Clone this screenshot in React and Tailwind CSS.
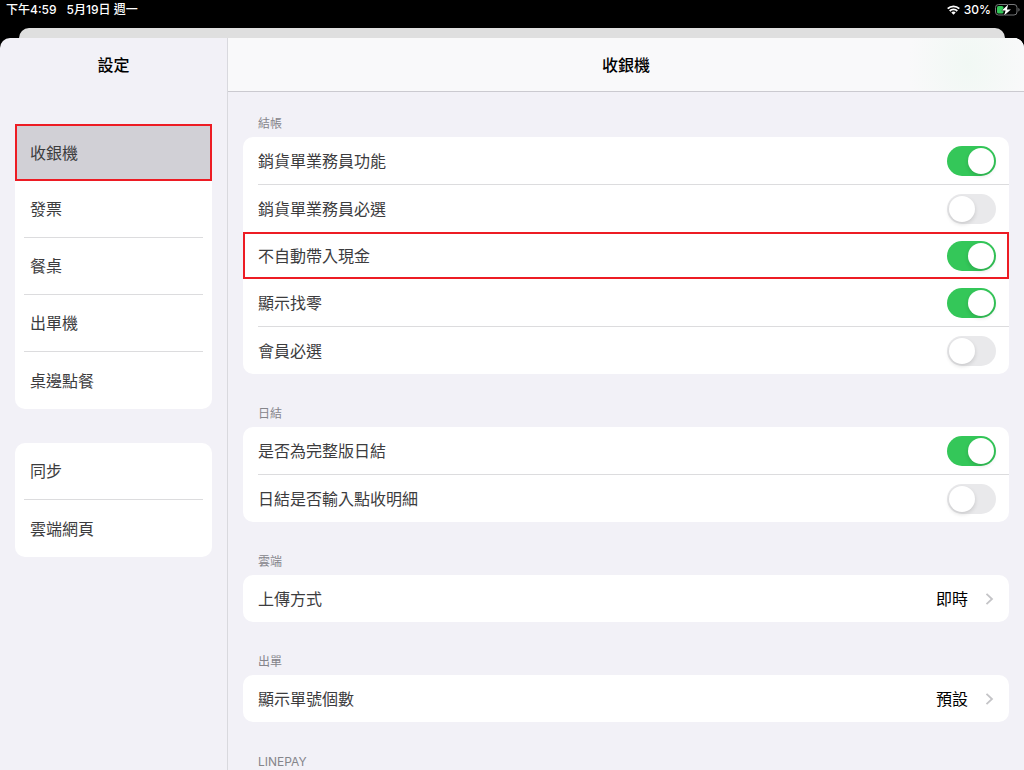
import React, { useState } from 'react';
import clsx from 'clsx';

const menuGroups = [
  ['收銀機', '發票', '餐桌', '出單機', '桌邊點餐'],
  ['同步', '雲端網頁'],
];

const sections = [
  {
    title: '結帳',
    rows: [
      { label: '銷貨單業務員功能', on: true, divider: true },
      { label: '銷貨單業務員必選', on: false },
      { label: '不自動帶入現金', on: true, marked: true },
      { label: '顯示找零', on: true, divider: true },
      { label: '會員必選', on: false },
    ],
  },
  {
    title: '日結',
    rows: [
      { label: '是否為完整版日結', on: true, divider: true },
      { label: '日結是否輸入點收明細', on: false },
    ],
  },
  { title: '雲端', rows: [{ label: '上傳方式', value: '即時' }] },
  { title: '出單', rows: [{ label: '顯示單號個數', value: '預設' }] },
  { title: 'LINEPAY', rows: [] },
];

const WifiIcon = () => (
  <svg width="13" height="10" viewBox="0 0 13 10" fill="none" stroke="#fff" strokeWidth="1.8">
    <path d="M0.7 3.7a8.2 8.2 0 0 1 11.6 0" />
    <path d="M2.7 6a5.3 5.3 0 0 1 7.6 0" />
    <path d="M6.5 9.8 4.3 7.6a3.1 3.1 0 0 1 4.4 0z" fill="#fff" stroke="none" />
  </svg>
);

const BatteryIcon = () => (
  <svg width="25" height="12" viewBox="0 0 25 12">
    <rect x="0.5" y="0.5" width="21.5" height="10.5" rx="3" fill="none" stroke="#77787a" />
    <path d="M23.4 4v3.6c.8-.3 1.2-1 1.2-1.8s-.4-1.5-1.2-1.8z" fill="#77787a" />
    <rect x="2" y="2" width="6.5" height="7.6" rx="1.6" fill="#34c759" />
    <path
      d="M13.2 0.4 6.9 6.6h3.7l-1.5 5 6.8-6.2h-4z"
      fill="#fff"
      stroke="#000"
      strokeWidth="0.8"
      paintOrder="stroke"
    />
  </svg>
);

const StatusBar = () => (
  <div className="flex h-7 shrink-0 items-start justify-between pt-0.5 pr-1 pl-1.5 text-xs leading-4 font-medium text-white">
    <div className="flex gap-2.5">
      <span>下午4:59</span>
      <span>5月19日 週一</span>
    </div>
    <div className="flex items-center gap-1">
      <WifiIcon />
      <span>30%</span>
      <BatteryIcon />
    </div>
  </div>
);

const Toggle = ({ id, defaultOn }) => {
  const [on, setOn] = useState(defaultOn);
  return (
    <input
      id={id}
      type="checkbox"
      role="switch"
      checked={on}
      onChange={() => setOn(!on)}
      className="h-[30px] w-[49px] shrink-0 cursor-pointer appearance-none rounded-full bg-[#e9e9eb] p-0.5 before:block before:size-[26px] before:rounded-full before:bg-white before:shadow-[0_2px_4px_rgba(0,0,0,0.14)] checked:bg-[#34c759] checked:before:ml-[19px]"
    />
  );
};

const Row = ({ id, row }) => (
  <li>
    <div className={clsx('flex h-[47px] items-center', row.marked ? 'border-2 border-[#ed1c24] pr-[11px] pl-[13px]' : 'pr-[13px] pl-[15px]')}>
      {row.value ? (
        <button type="button" className="flex flex-1 items-center text-left">
          <span className="flex-1">{row.label}</span>
          <span className="text-black">{row.value}</span>
          <svg className="mr-0.5 ml-[17px]" width="9" height="14" viewBox="0 0 9 14" fill="none" stroke="#c4c4c7" strokeWidth="1.8">
            <path d="M1.5 1.8 7 7l-5.5 5.2" />
          </svg>
        </button>
      ) : (
        <>
          <label htmlFor={id} className="flex-1">{row.label}</label>
          <Toggle id={id} defaultOn={row.on} />
        </>
      )}
    </div>
    {row.divider && <div className="ml-[15px] h-px bg-[#dcdcde]" />}
  </li>
);

const Sidebar = () => {
  const [active, setActive] = useState('收銀機');
  return (
    <aside className="flex w-[228px] shrink-0 flex-col border-r border-[#d9d9de]">
      <h1 className="h-[54px] text-center text-base leading-[54px] font-medium text-black">設定</h1>
      <nav className="mt-8 flex flex-col gap-[34px] pr-[15px] pl-[15px]">
        {menuGroups.map((group) => (
          <ul key={group[0]} className={clsx('bg-white', group.includes(active) ? 'rounded-b-[10px]' : 'rounded-[10px]')}>
            {group.map((item, i) => (
              <li key={item}>
                <button
                  type="button"
                  onClick={() => setActive(item)}
                  className={clsx(
                    'flex h-[57px] w-full text-left',
                    item === active ? 'border-2 border-[#ed1c24] bg-[#d1d0d6] px-[7px]' : 'px-[9px]'
                  )}
                >
                  <span
                    className={clsx(
                      'flex h-full flex-1 items-center px-1.5',
                      item !== active && i < group.length - 1 && 'border-b border-[#dcdcde]'
                    )}
                  >
                    {item}
                  </span>
                </button>
              </li>
            ))}
          </ul>
        ))}
      </nav>
    </aside>
  );
};

const Settings = () => (
  <main className="flex min-w-0 flex-1 flex-col">
    <h2 className="h-[54px] shrink-0 rounded-tr-[10px] border-b border-[#cbcad0] bg-[#f9f9fa] bg-[radial-gradient(ellipse_60px_80px_at_93%_50%,#f1f8f4,#f9f9fa)] text-center text-base leading-[54px] font-medium text-black">
      收銀機
    </h2>
    <div className="min-h-0 flex-1 overflow-hidden pt-6 pr-[15px] pl-[15px]">
      {sections.map((section, s) => (
        <section key={section.title} className="mb-8">
          <h3 className="mb-[5px] pl-[15px] text-xs leading-4 text-[#85858b]">{section.title}</h3>
          <ul className="rounded-[10px] bg-white">
            {section.rows.map((row, r) => (
              <Row key={row.label} id={`setting-${s}-${r}`} row={row} />
            ))}
          </ul>
        </section>
      ))}
    </div>
  </main>
);

const App = () => {
  return (
    <div
      lang="zh-Hant"
      className="flex h-screen flex-col overflow-hidden bg-black font-['Inter','Noto_Sans_CJK_TC',sans-serif] text-base leading-6 text-[#3c3c3e]"
    >
      <StatusBar />
      <div className="mx-[19px] h-2.5 shrink-0 rounded-t-[10px] bg-[#dfdfdf]" />
      <div className="flex min-h-0 flex-1 rounded-t-[10px] bg-[#f2f1f7]">
        <Sidebar />
        <Settings />
      </div>
    </div>
  );
};

export default App;
